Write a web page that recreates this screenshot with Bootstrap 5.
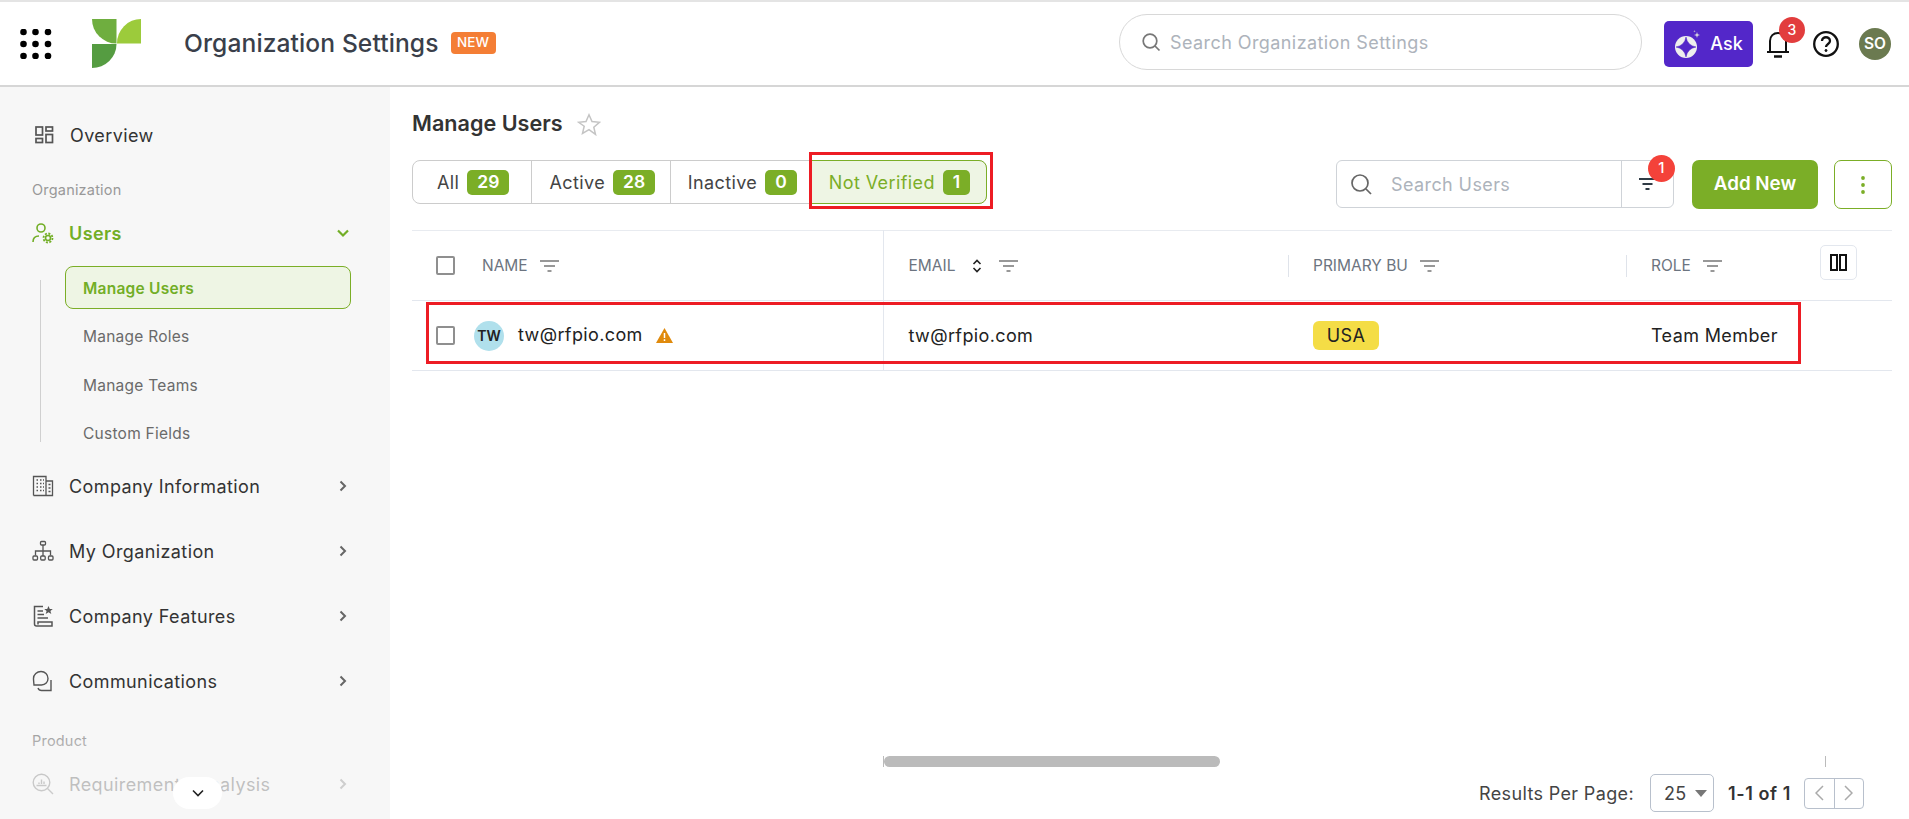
<!DOCTYPE html>
<html lang="en">
<head>
<meta charset="utf-8">
<title>Organization Settings</title>
<link href="https://cdn.jsdelivr.net/npm/bootstrap@5.3.0/dist/css/bootstrap.min.css" rel="stylesheet">
<style>
html,body{height:100%;overflow:hidden;background:#fff}
body{font-family:Inter,"Liberation Sans",sans-serif;color:#333}
.app-shell{height:819px;display:flex;flex-direction:column}
.top-bar{height:87px;flex:none;border-top:2px solid #e4e4e4;border-bottom:2px solid #d6d6d6;padding:0 18px 0 20px}
.logo-mark{margin-left:40px}
.app-title{font-size:24.6px;font-weight:500;color:#3a3f4a;margin-left:43px;letter-spacing:.1px}
.new-tag{background:#f47e35;color:#fff;font-size:13.5px;font-weight:500;border-radius:4px;width:45px;height:22px;margin-left:12px;margin-top:-2px}
.top-search{width:523px;height:56px;border:1px solid #d8d8d8;border-radius:28px;margin-left:auto;margin-top:-3px;padding-left:21px;color:#adb3bb;font-size:18px;gap:9px;letter-spacing:.42px}
.ask-btn{width:89px;height:46px;background:#5327c9;color:#fff;border-radius:5px;font-size:18px;font-weight:500;margin-left:22px;gap:8px}
.bell-wrap{width:40px;margin-left:12px;height:40px}
.dot-red{position:absolute;background:#e23d3d;color:#fff;border-radius:50%;display:flex;align-items:center;justify-content:center;font-size:14px;font-weight:500}
.bell-dot{width:26px;height:26px;top:-7px;left:14px}
.help-ic{margin-left:7px}
.user-dot{width:32px;height:32px;border-radius:50%;background:#6b7a50;color:#fff;font-size:15.5px;font-weight:600;margin-left:19px}
.body-row{flex:1;min-height:0}
.side-bar{width:390px;flex:none;background:#f7f7f7;padding:24px 39px 0 32px;position:relative;overflow:hidden}
.side-item{height:48px;font-size:18px;color:#333;gap:15px;letter-spacing:.4px}
.side-item svg.ic{width:22px;height:22px;flex:none}
.side-first{padding-left:1px}
.side-item .chev{margin-left:auto;width:12px;height:12px;margin-right:2px}
.side-label{height:20px;font-size:14.5px;color:#999;margin-top:21px;margin-bottom:9px;line-height:20px;letter-spacing:.2px}
.side-label-low{margin-top:26px}
.side-on{color:#72ae26;font-weight:600}
.side-sub{margin-top:9px;margin-left:33px;gap:5.5px;position:relative;margin-bottom:7.5px}
.side-sub::before{content:"";position:absolute;left:-25px;top:14px;bottom:13px;border-left:1px solid #d0d0d0}
.sub-link{height:43px;font-size:15.5px;color:#6a6a6a;padding:2px 0 0 17px;border:1px solid transparent;border-radius:8px;letter-spacing:.25px}
.sub-on{border-color:#7bae27;background:#eef5e4;color:#72ae26;font-weight:600}
.side-gap{gap:17px}
.side-fade{position:absolute;left:0;right:0;bottom:0;height:90px;background:linear-gradient(to bottom,rgba(247,247,247,0),rgba(247,247,247,.7) 45%,rgba(247,247,247,.75))}
.side-pill{position:absolute;left:173px;bottom:10px;width:49px;height:32px;background:#fff;border-radius:16px}
.main-pane{flex:1;min-width:0;padding:23px 17px 7px 22px;display:flex;flex-direction:column}
.page-head{height:28px;gap:14px}
.page-head h1{font-size:21.6px;font-weight:600;margin:0;color:#333}
.tool-row{height:49px;margin-top:22px;margin-bottom:21px}
.seg-group{height:44px;border:1px solid #ccc;border-radius:8px;position:relative}
.seg-item{height:100%;font-size:18px;color:#444;gap:8px;border-right:1px solid #ccc;letter-spacing:.4px}
.seg-a{padding:0 22px 0 24px}
.seg-b{padding:0 15px 0 17px}
.seg-c{padding:0 10px 0 16.500px;border-right:0}
.seg-d{padding:0 16px 0 17px;border:1px solid #7bae27;border-radius:0 8px 8px 0;background:#eef5e4;color:#7bae27;margin:-1px -1px -1px 4px;height:44px}
.cnt{background:#7bae27;color:#fff;font-weight:600;font-size:17.5px;border-radius:5px;height:25px;padding:0 10px;display:flex;align-items:center;letter-spacing:0}
.mark-box{position:absolute;border:3px solid #ed1c24;pointer-events:none}
.mark-tab{left:396px;top:-9px;width:184px;height:57px}
.user-search{width:338px;height:48px;border:1px solid #cfd3d8;border-radius:6px;margin-left:auto;color:#adb3bb;font-size:18px;letter-spacing:.4px}
.user-search .s-main{flex:1;padding-left:13px;gap:19px}
.user-search .s-filter{width:52px;height:100%;border-left:1px solid #cfd3d8;position:relative}
.filter-dot{width:27px;height:27px;background:#f4423a;top:-6px;left:26px;font-size:15px}
.add-btn{width:126px;height:49px;background:#7bae27;border:0;border-radius:7px;color:#fff;font-size:18.8px;font-weight:600;margin-left:18px}
.add-btn:hover{background:#7bae27;color:#fff}
.dots-btn{width:58px;height:49px;border:1px solid #7bae27;border-radius:7px;margin-left:16px;padding:0}
.grid-wrap{position:relative;flex:1}
.user-tbl{table-layout:fixed;width:100%;margin:0;border-top:1px solid #e8ebf0}
.w-name{width:471px}.w-mail{width:405px}.w-bu{width:338px}
.user-tbl th,.user-tbl td{border-bottom:1px solid #e3e7ee;padding:0;vertical-align:middle;box-shadow:none}
.user-tbl tr{height:70px}
.user-tbl th{font-size:15.5px;font-weight:400;color:#6c7480;text-transform:uppercase}
.user-tbl td{font-size:18px;color:#222;letter-spacing:.38px}
.col-line{border-right:1px solid #e3e7ee}
.cell-first{padding-left:24px}
.cell-next{padding-left:25px;position:relative}
.cell-next.tick::before{content:"";position:absolute;left:0;top:1px;height:22px;border-left:1px solid #dfe3ea}
.chk-box{width:19px;height:19px;border:2px solid #8f8f8f;border-radius:2px;flex:none}
.name-lab{margin-left:27px}
.hd-filter{margin-left:12px}
.hd-sort{margin-left:17px}
.hd-filter-m{margin-left:17px}
.ava-dot{width:30px;height:30px;border-radius:50%;background:#b0e0ec;color:#222;font-size:14px;font-weight:600;margin-left:19px;margin-right:14px;flex:none;letter-spacing:0}
.mail-raise{margin-top:-2px}
.warn-ic{margin-left:13px}
.bu-tag{background:#f4dd46;color:#222;border-radius:6px;height:29px;width:66px;font-size:18px}
.cols-btn{position:absolute;top:15px;right:35px;width:37px;height:35px;border:1px solid #e3e7ee;border-radius:5px}
.mark-row{left:14px;top:72px;width:1375px;height:62px}
.scroll-row{height:11px;margin-left:471px;width:943px;border-left:1px solid #bbb;border-right:1px solid #bbb;margin-bottom:7px}
.scroll-thumb{width:336px;height:11px;background:#bbb;border-radius:6px}
.pager-row{height:38px;font-size:18px;color:#444;padding-right:28px;letter-spacing:.35px}
.size-pick{width:64px;height:38px;border:1px solid #b8c0cc;border-radius:5px;margin-left:16px;font-size:18px;padding-left:13px;gap:8px;color:#444}
.pick-arrow{width:0;height:0;border-left:6px solid transparent;border-right:6px solid transparent;border-top:7px solid #777}
.pg-count{font-weight:600;margin-left:14px;color:#333;letter-spacing:.6px}
.pg-arrows{width:60px;height:31px;border:1px solid #b8c0cc;border-radius:4px;margin-left:13px}
.pg-arrows span{flex:1;height:100%}
.pg-arrows span+span{border-left:1px solid #b8c0cc}
</style>
</head>
<body>
<div class="app-shell">
  <header class="top-bar d-flex align-items-center">
    <svg width="32" height="30" viewBox="0 0 32 30" fill="#000"><circle cx="3.5" cy="3" r="3.3"/><circle cx="15.500" cy="3" r="3.3"/><circle cx="28" cy="3" r="3.3"/><circle cx="3.500" cy="15" r="3.3"/><circle cx="15.500" cy="15" r="3.3"/><circle cx="28" cy="15" r="3.3"/><circle cx="3.500" cy="27" r="3.3"/><circle cx="15.500" cy="27" r="3.3"/><circle cx="28" cy="27" r="3.3"/></svg>
    <svg class="logo-mark" width="49" height="49" viewBox="0 0 49 49"><path d="M0 0H24.500V24.500A24.500 24.500 0 0 1 0 0Z" fill="#6fae3f"/><path d="M25 24.500A24 24.500 0 0 1 49 0V24.500Z" fill="#9ccb3b"/><path d="M0 25H24.500A24.500 24 0 0 1 0 49Z" fill="#559c41"/></svg>
    <span class="app-title">Organization Settings</span>
    <span class="new-tag d-flex align-items-center justify-content-center">NEW</span>
    <div class="top-search d-flex align-items-center">
      <svg width="20" height="20" viewBox="0 0 20 20" fill="none" stroke="#777" stroke-width="1.700"><circle cx="9" cy="9" r="6.800"/><path d="M14 14l4.500 4.500"/></svg>
      <span>Search Organization Settings</span>
    </div>
    <div class="ask-btn d-flex align-items-center justify-content-center">
      <svg width="28" height="30" viewBox="0 0 28 30"><circle cx="12" cy="18" r="11" fill="#eee"/><path d="M12 8Q13.500 16.500 22 18Q13.500 19.500 12 28Q10.500 19.500 2 18Q10.500 16.500 12 8Z" fill="#5327c9" stroke="#5327c9" stroke-width=".5" stroke-linejoin="round"/><path d="M23 3l.7 2.300 2.300.7-2.300.7-.7 2.300-.7-2.300-2.300-.7 2.300-.7z" fill="#ddd"/><path d="M20.500 1l.3 1 1 .3-1 .3-.3 1-.3-1-1-.3 1-.3z" fill="#ccc"/></svg>
      <span>Ask</span>
    </div>
    <div class="bell-wrap position-relative d-flex align-items-center">
      <svg width="26" height="28" viewBox="0 0 26 28" fill="none" stroke="#111" stroke-width="2"><path d="M2 22H24M5 22V11C5 6 8.500 3 13 3S21 6 21 11V22"/><path d="M9 26.500H17" stroke-width="2.500"/></svg>
      <span class="dot-red bell-dot">3</span>
    </div>
    <svg class="help-ic" width="28" height="28" viewBox="0 0 28 28" fill="none" stroke="#111" stroke-width="2.300"><circle cx="14" cy="14" r="11.800"/><path d="M10 11c0-5 8-5 8 0 0 3-4 3-4 6"/><circle cx="14" cy="20.500" r="1" fill="#111" stroke-width="1"/></svg>
    <div class="user-dot d-flex align-items-center justify-content-center">SO</div>
  </header>
  <div class="body-row d-flex">
    <nav class="side-bar">
      <div class="side-item side-first d-flex align-items-center">
        <svg class="ic" viewBox="0 0 22 22" fill="none" stroke="#555" stroke-width="1.700"><rect x="3" y="3" width="6.500" height="8"/><rect x="13" y="3" width="6.500" height="4"/><rect x="3" y="14.500" width="6.500" height="4"/><rect x="13" y="10.500" width="6.500" height="8"/></svg>
        <span>Overview</span>
      </div>
      <div class="side-label">Organization</div>
      <div class="side-item side-on d-flex align-items-center">
        <svg class="ic" viewBox="0 0 22 22" fill="none" stroke="#72ae26" stroke-width="1.600"><circle cx="9" cy="6" r="4"/><path d="M1 20c0-4 2-6 6-6"/><circle cx="16" cy="16" r="2.500"/><circle cx="16" cy="16" r="4.500" stroke-dasharray="2 1.500" stroke-width="1.800"/></svg>
        <span>Users</span>
        <svg class="chev" viewBox="0 0 12 12" fill="none" stroke="#72ae26" stroke-width="2.200"><path d="M1 3.500L6 8.500L11 3.500"/></svg>
      </div>
      <div class="side-sub d-flex flex-column">
        <div class="sub-link sub-on d-flex align-items-center">Manage Users</div>
        <div class="sub-link d-flex align-items-center">Manage Roles</div>
        <div class="sub-link d-flex align-items-center">Manage Teams</div>
        <div class="sub-link d-flex align-items-center">Custom Fields</div>
      </div>
      <div class="side-gap d-flex flex-column">
        <div class="side-item d-flex align-items-center">
          <svg class="ic" viewBox="0 0 22 22" fill="none" stroke="#555" stroke-width="1.300"><path d="M1.500 20.500V1.500H14V20.500M14 6H20.500V20.500H1.500"/><path d="M4.500 5h1.500M8 5h1.500M11 5h1M4.500 8.500h1.500M8 8.500h1.500M11 8.500h1M4.500 12h1.500M8 12h1.500M11 12h1M4.500 15.500h1.500M8 15.500h1.500M11 15.500h1M16.500 9.500h2M16.500 13h2M16.500 16.500h2"/></svg>
          <span>Company Information</span>
          <svg class="chev" viewBox="0 0 12 12" fill="none" stroke="#666" stroke-width="2"><path d="M3.500 1.500L8 6L3.500 10.500"/></svg>
        </div>
        <div class="side-item d-flex align-items-center">
          <svg class="ic" viewBox="0 0 22 22" fill="none" stroke="#555" stroke-width="1.300"><rect x="8.500" y="1.500" width="5" height="3.500" rx="1"/><path d="M11 5V16M3.500 15.500V11H18.500V15.500"/><rect x="1" y="16" width="4.500" height="4" rx="1"/><rect x="8.700" y="16" width="4.500" height="4" rx="1"/><rect x="16.500" y="16" width="4.500" height="4" rx="1"/></svg>
          <span>My Organization</span>
          <svg class="chev" viewBox="0 0 12 12" fill="none" stroke="#666" stroke-width="2"><path d="M3.500 1.500L8 6L3.500 10.500"/></svg>
        </div>
        <div class="side-item d-flex align-items-center">
          <svg class="ic" viewBox="0 0 22 22" fill="none" stroke="#555" stroke-width="1.500"><path d="M11 1.500H2.500V19C2.500 20 3 21 4.500 21H20V17H6V19.500M5.500 6H11M5.500 9.500H12M5.500 13H16"/><path d="M16.500 1l1.300 3h3l-2.400 2 .9 3-2.800-1.700L13.700 9l.9-3-2.400-2h3z" fill="#555" stroke="none"/></svg>
          <span>Company Features</span>
          <svg class="chev" viewBox="0 0 12 12" fill="none" stroke="#666" stroke-width="2"><path d="M3.500 1.500L8 6L3.500 10.500"/></svg>
        </div>
        <div class="side-item d-flex align-items-center">
          <svg class="ic" viewBox="0 0 22 22" fill="none" stroke="#555" stroke-width="1.400"><path d="M2 15H9.500C13.500 15 16 12 16 8.500C16 4.500 13 1.500 9 1.500S1.500 4.500 1.500 8.500C1.500 10 2 15 2 15Z"/><path d="M19 10V20.500H9.500C8 20.500 6.500 19.500 6 18"/></svg>
          <span>Communications</span>
          <svg class="chev" viewBox="0 0 12 12" fill="none" stroke="#666" stroke-width="2"><path d="M3.500 1.500L8 6L3.500 10.500"/></svg>
        </div>
      </div>
      <div class="side-label side-label-low">Product</div>
      <div class="side-item d-flex align-items-center">
        <svg class="ic" viewBox="0 0 22 22" fill="none" stroke="#555" stroke-width="1.400"><circle cx="9.500" cy="9.500" r="8.300"/><path d="M15.500 15.500L21 21M4.500 12.500H14.500M7 11V9.500M9.500 11V6.500M12 11V8.500"/></svg>
        <span>Requirements Analysis</span>
        <svg class="chev" viewBox="0 0 12 12" fill="none" stroke="#666" stroke-width="2"><path d="M3.500 1.500L8 6L3.500 10.500"/></svg>
      </div>
      <div class="side-fade"></div>
      <div class="side-pill d-flex align-items-center justify-content-center">
        <svg width="12" height="8" viewBox="0 0 12 8" fill="none" stroke="#222" stroke-width="1.600"><path d="M1 1.500L6 6.500L11 1.500"/></svg>
      </div>
    </nav>
    <main class="main-pane">
      <div class="page-head d-flex align-items-center">
        <h1>Manage Users</h1>
        <svg width="24" height="23" viewBox="0 0 24 23" fill="none" stroke="#c4c4c4" stroke-width="1.500"><path d="M12 1.800l3 6.800 7.400.7-5.600 4.900 1.700 7.200L12 16.600l-6.500 3.800 1.700-7.200L1.600 9.300 9 8.600z"/></svg>
      </div>
      <div class="tool-row d-flex align-items-start">
        <div class="seg-group d-inline-flex">
          <div class="seg-item seg-a d-flex align-items-center"><span>All</span><span class="cnt">29</span></div>
          <div class="seg-item seg-b d-flex align-items-center"><span>Active</span><span class="cnt">28</span></div>
          <div class="seg-item seg-c d-flex align-items-center"><span>Inactive</span><span class="cnt">0</span></div>
          <div class="seg-item seg-d d-flex align-items-center"><span>Not Verified</span><span class="cnt">1</span></div>
          <div class="mark-box mark-tab"></div>
        </div>
        <div class="user-search d-flex align-items-center">
          <div class="s-main d-flex align-items-center">
            <svg width="22" height="22" viewBox="0 0 22 22" fill="none" stroke="#666" stroke-width="1.700"><circle cx="10" cy="10" r="8"/><path d="M16 16l5 5"/></svg>
            <span>Search Users</span>
          </div>
          <div class="s-filter d-flex align-items-center justify-content-center">
            <svg width="17" height="14" viewBox="0 0 17 14" fill="none" stroke="#2f3b45" stroke-width="2"><path d="M0 2H17M3.500 7H13.500M6.500 12H10.500"/></svg>
            <span class="dot-red filter-dot">1</span>
          </div>
        </div>
        <button class="btn add-btn" type="button">Add New</button>
        <button class="btn dots-btn d-flex align-items-center justify-content-center" type="button" aria-label="More">
          <svg width="4" height="18" viewBox="0 0 4 18" fill="#7bae27"><circle cx="2" cy="2" r="1.900"/><circle cx="2" cy="9" r="1.900"/><circle cx="2" cy="16" r="1.900"/></svg>
        </button>
      </div>
      <div class="grid-wrap">
        <table class="table user-tbl">
          <colgroup><col class="w-name"><col class="w-mail"><col class="w-bu"><col></colgroup>
          <thead>
            <tr>
              <th class="col-line"><div class="cell-first d-flex align-items-center"><span class="chk-box"></span><span class="name-lab">Name</span>
                <svg class="hd-filter" width="19" height="12" viewBox="0 0 19 12" fill="none" stroke="#777" stroke-width="1.500"><path d="M0 1H19M4 6H15M7.500 11H11.500"/></svg></div></th>
              <th><div class="cell-next d-flex align-items-center"><span>Email</span>
                <svg class="hd-sort" width="10" height="14" viewBox="0 0 10 14" fill="none" stroke="#222" stroke-width="1.600"><path d="M1.500 5L5 1.500 8.500 5M1.500 9L5 12.500 8.500 9"/></svg>
                <svg class="hd-filter-m" width="19" height="12" viewBox="0 0 19 12" fill="none" stroke="#777" stroke-width="1.500"><path d="M0 1H19M4 6H15M7.500 11H11.500"/></svg></div></th>
              <th><div class="cell-next tick d-flex align-items-center"><span>Primary BU</span>
                <svg class="hd-filter" width="19" height="12" viewBox="0 0 19 12" fill="none" stroke="#777" stroke-width="1.500"><path d="M0 1H19M4 6H15M7.500 11H11.500"/></svg></div></th>
              <th><div class="cell-next tick d-flex align-items-center"><span>Role</span>
                <svg class="hd-filter" width="19" height="12" viewBox="0 0 19 12" fill="none" stroke="#777" stroke-width="1.500"><path d="M0 1H19M4 6H15M7.500 11H11.500"/></svg></div></th>
            </tr>
          </thead>
          <tbody>
            <tr>
              <td class="col-line"><div class="cell-first d-flex align-items-center"><span class="chk-box"></span><span class="ava-dot d-flex align-items-center justify-content-center">TW</span><span class="mail-raise">tw@rfpio.com</span>
                <svg class="warn-ic" width="17" height="15" viewBox="0 0 17 15"><path d="M8.500 0L17 15H0Z" fill="#e08a0c"/><path d="M8.500 5V10M8.500 11.300V13" stroke="#fff" stroke-width="1.500"/></svg></div></td>
              <td><div class="cell-next d-flex align-items-center">tw@rfpio.com</div></td>
              <td><div class="cell-next d-flex align-items-center"><span class="bu-tag d-flex align-items-center justify-content-center">USA</span></div></td>
              <td><div class="cell-next d-flex align-items-center">Team Member</div></td>
            </tr>
          </tbody>
        </table>
        <div class="cols-btn d-flex align-items-center justify-content-center">
          <svg width="17" height="17" viewBox="0 0 17 17" fill="none" stroke="#111" stroke-width="2"><rect x="1" y="1" width="6" height="15"/><rect x="10" y="1" width="6" height="15"/></svg>
        </div>
        <div class="mark-box mark-row"></div>
      </div>
      <div class="scroll-row"><div class="scroll-thumb"></div></div>
      <div class="pager-row d-flex align-items-center justify-content-end">
        <span>Results Per Page:</span>
        <div class="size-pick d-flex align-items-center"><span>25</span><span class="pick-arrow"></span></div>
        <span class="pg-count">1-1 of 1</span>
        <div class="pg-arrows d-flex">
          <span class="d-flex align-items-center justify-content-center"><svg width="9" height="16" viewBox="0 0 9 16" fill="none" stroke="#aaa" stroke-width="1.500"><path d="M8 1L1 8L8 15"/></svg></span>
          <span class="d-flex align-items-center justify-content-center"><svg width="9" height="16" viewBox="0 0 9 16" fill="none" stroke="#aaa" stroke-width="1.500"><path d="M1 1L8 8L1 15"/></svg></span>
        </div>
      </div>
    </main>
  </div>
</div>
<script src="https://cdn.jsdelivr.net/npm/bootstrap@5.3.0/dist/js/bootstrap.bundle.min.js"></script>
</body>
</html>
